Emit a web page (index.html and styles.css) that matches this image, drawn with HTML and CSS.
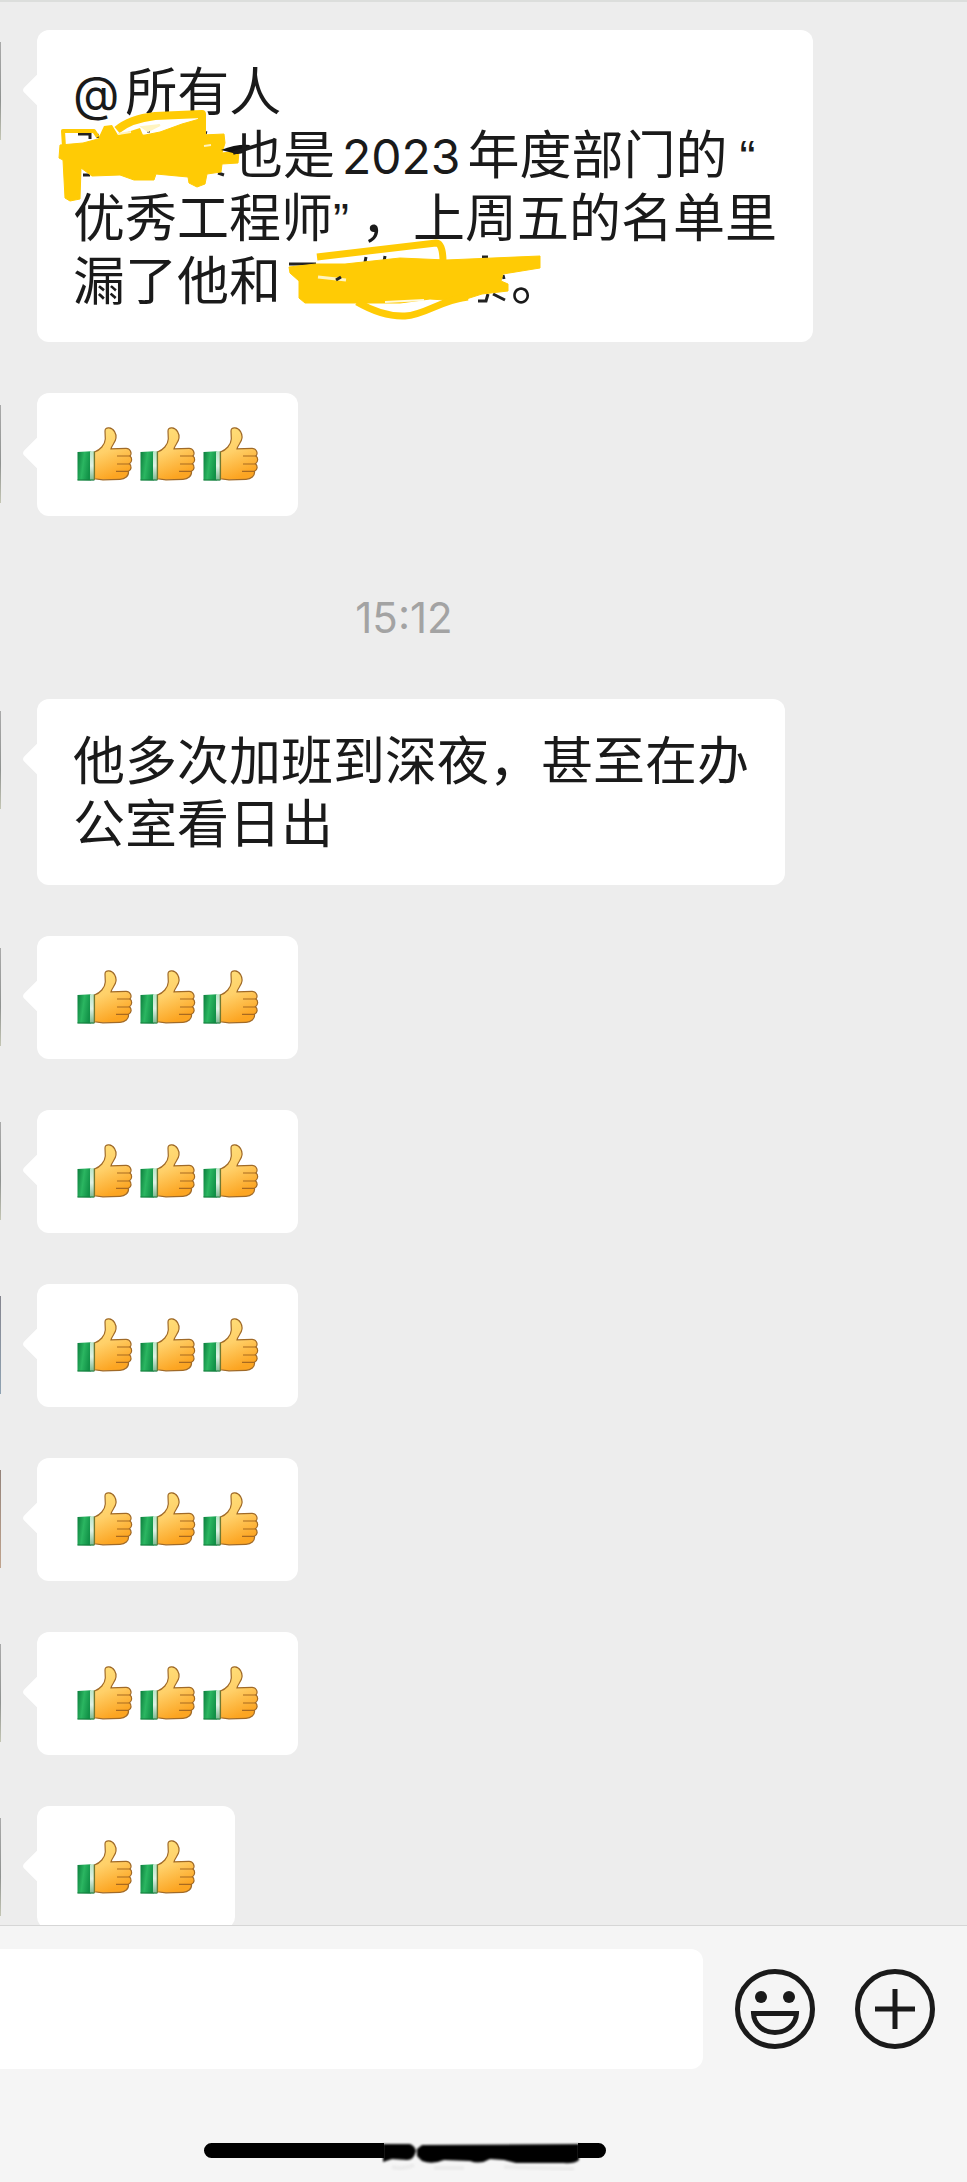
FILE: index.html
```
<!DOCTYPE html>
<html lang="zh-CN">
<head>
    <meta charset="UTF-8" />
    <meta name="viewport" content="width=device-width, initial-scale=1.0" />
    <title>群聊</title>
    <link rel="stylesheet" href="styles.css">
</head>
<body>
    <!-- shared drawings -->
    <svg class="defs" aria-hidden="true">
        <defs>
            <linearGradient id="skin" x1="0" y1="0" x2="0.3" y2="1">
                <stop offset="0" stop-color="#ffe07a" />
                <stop offset="0.5" stop-color="#ffd069" />
                <stop offset="1" stop-color="#fca522" />
            </linearGradient>
            <linearGradient id="sleeve" x1="0" y1="0" x2="1" y2="0.3">
                <stop offset="0" stop-color="#0b7d3c" />
                <stop offset="0.5" stop-color="#2bb661" />
                <stop offset="1" stop-color="#119147" />
            </linearGradient>
            <linearGradient id="cuff" x1="0" y1="0" x2="0" y2="1">
                <stop offset="0" stop-color="#b9e6c8" />
                <stop offset="0.5" stop-color="#dff2e5" />
                <stop offset="1" stop-color="#7cb890" />
            </linearGradient>
            <filter id="smear" x="-5%" y="-50%" width="110%" height="200%">
                <feGaussianBlur stdDeviation="1.2" />
            </filter>
        </defs>
        <symbol id="thumb" viewBox="0 0 63 63">
            <path d="M21.5 29 C27 27 32 22 32.3 16 L32 8 C32 5.5 33.5 4.7 36 4.9 C41 5.3 43.5 11 43 15 C42.6 19 39 22 38 25.8 L53 25.3 C57 25.2 59.5 30 57 33 C59.5 35 59 39 56.5 40.7 C59 43 58.5 47 55.5 48.3 C56 53 52 56.3 47 56.3 L30 56.8 L21.5 55.8 Z" fill="url(#skin)" stroke="#a06a28" stroke-width="1.2" />
            <path d="M44 33 H57 M44 41 H56.5 M43 48.4 H55.5" fill="none" stroke="#a86a20" stroke-width="1.1" />
            <path d="M4.5 29 L18 28.2 V57.4 L4.5 57.2 Z" fill="url(#sleeve)" />
            <path d="M17 28.2 H21 V57.4 H17 Z" fill="url(#cuff)" />
            <path d="M4.5 57 H21.5" stroke="#157a3c" stroke-width="1" />
            <path d="M21.3 28.5 V57" stroke="#6d7b32" stroke-width="1.2" />
        </symbol>
    </svg>

    <main class="chat">
        <div class="message">
            <span class="avatar"></span>
            <p class="bubble"><span class="latin at">@</span>所有人<br><svg class="scribble name-one" viewBox="73 120 158 63" role="img" aria-label="已涂抹"><g fill="none" stroke="#222" stroke-width="3"><path d="M78 134 H90 V139 M97 134 L98 138 M128 136 H133 M147 131 H150 M203 132 L207 133 M83 175 H90 M88 168 L91 172 M218 173 L224 175" /></g><path d="M60 145 L83 143 L98 139 L118 136 L145 135 L160 132 L182 124 L203 118 L203 135 L224 134 L225 143 L222 153 L239 151 L238 163 L222 164 L221 172 L207 174 L205 184 L197 187 L189 183 L188 177 L156 174 L154 180 L134 180 L120 175 L92 176 L81 168 L80 199 L70 201 L65 198 L63 160 L59 158 Z" fill="#ffcb05" stroke="#ffcb05" stroke-width="1" /><path d="M98 139 L104 126 L112 125 L118 135 L140 128 L146 142 H96 Z" fill="#ffcb05" /><path d="M64 147 L63 131 H94 L98 137" fill="none" stroke="#ffcb05" stroke-width="4" stroke-linejoin="round" /><path d="M117 130 Q130 119 155 116 L202 114 V140" fill="none" stroke="#ffcb05" stroke-width="8" stroke-linejoin="round" /><path d="M118 134 L131 132 M142 127 L160 125 L148 131 Z M204 146 L211 145" fill="#fff4c0" stroke="#fff4c0" stroke-width="2" /><path d="M221 150 Q236 144 250 145 Q246 154 237 154 Z" fill="#111" /></svg>也是<span class="latin number">2023</span>年度部门的<span class="latin quote open">“</span><br>优秀工程师<span class="latin quote close">”</span>，上周五的名单里<br>漏了他和<svg class="scribble name-two" viewBox="281 246 230 63" role="img" aria-label="已涂抹"><g fill="none" stroke="#222" stroke-width="3"><path d="M289 264 H316 M366 257 L365 262 M385 256 L384 262 M482 257 H488 M503 275 L504 279 M478 301 H486 L488 294 M493 294 L505 300 M461 300 L468 296" /></g><path d="M289 267 L316 264 L345 264 L400 258 L446 260 L540 256 V268 L503 274 L501 281 L508 284 V291 L482 294 L460 301 L430 299 L400 303 H305 L299 298 V281 L290 273 Z" fill="#ffcb05" stroke="#ffcb05" /><path d="M317 257 L436 243 Q443 243 443 262 M357 302 Q383 317 405 316 C426 315 440 300 468 297" fill="none" stroke="#ffcb05" stroke-width="7" /><path d="M318 277 L346 280" stroke="#fff4c0" stroke-width="3" /><path d="M336 280 L341 277" stroke="#222" stroke-width="3" /><path d="M385 302 L424 300" stroke="#fff9dc" stroke-width="2" /></svg>。</p>
        </div>
        <div class="message">
            <span class="avatar"></span>
            <p class="bubble thumbs"><svg role="img" aria-label="赞"><use href="#thumb" /></svg><svg role="img" aria-label="赞"><use href="#thumb" /></svg><svg role="img" aria-label="赞"><use href="#thumb" /></svg></p>
        </div>

        <time class="time">15:12</time>

        <div class="message">
            <span class="avatar"></span>
            <p class="bubble">他多次加班到深夜，甚至在办<br>公室看日出</p>
        </div>
        <div class="message">
            <span class="avatar"></span>
            <p class="bubble thumbs"><svg role="img" aria-label="赞"><use href="#thumb" /></svg><svg role="img" aria-label="赞"><use href="#thumb" /></svg><svg role="img" aria-label="赞"><use href="#thumb" /></svg></p>
        </div>
        <div class="message">
            <span class="avatar"></span>
            <p class="bubble thumbs"><svg role="img" aria-label="赞"><use href="#thumb" /></svg><svg role="img" aria-label="赞"><use href="#thumb" /></svg><svg role="img" aria-label="赞"><use href="#thumb" /></svg></p>
        </div>
        <div class="message">
            <span class="avatar blue"></span>
            <p class="bubble thumbs"><svg role="img" aria-label="赞"><use href="#thumb" /></svg><svg role="img" aria-label="赞"><use href="#thumb" /></svg><svg role="img" aria-label="赞"><use href="#thumb" /></svg></p>
        </div>
        <div class="message">
            <span class="avatar brown"></span>
            <p class="bubble thumbs"><svg role="img" aria-label="赞"><use href="#thumb" /></svg><svg role="img" aria-label="赞"><use href="#thumb" /></svg><svg role="img" aria-label="赞"><use href="#thumb" /></svg></p>
        </div>
        <div class="message">
            <span class="avatar"></span>
            <p class="bubble thumbs"><svg role="img" aria-label="赞"><use href="#thumb" /></svg><svg role="img" aria-label="赞"><use href="#thumb" /></svg><svg role="img" aria-label="赞"><use href="#thumb" /></svg></p>
        </div>
        <div class="message">
            <span class="avatar"></span>
            <p class="bubble thumbs"><svg role="img" aria-label="赞"><use href="#thumb" /></svg><svg role="img" aria-label="赞"><use href="#thumb" /></svg></p>
        </div>
    </main>

    <footer class="toolbar">
        <form class="composer">
            <input type="text" class="field" aria-label="消息" />
            <button type="button" class="icon" aria-label="表情">
                <svg viewBox="0 0 80 80">
                    <circle cx="40" cy="40" r="37.5" fill="none" stroke="#1a1a1a" stroke-width="5" />
                    <circle cx="26" cy="28" r="6" fill="#1a1a1a" />
                    <circle cx="54" cy="28" r="6" fill="#1a1a1a" />
                    <path d="M18.500 44.500 H61.500 C61 56 51 63.500 40 63.500 C29 63.500 19 56 18.500 44.500 Z" fill="none" stroke="#1a1a1a" stroke-width="5" />
                </svg>
            </button>
            <button type="button" class="icon" aria-label="更多">
                <svg viewBox="0 0 80 80">
                    <circle cx="40" cy="40" r="37.5" fill="none" stroke="#1a1a1a" stroke-width="5" />
                    <path d="M20 40 H60 M40 20 V60" fill="none" stroke="#1a1a1a" stroke-width="5" />
                </svg>
            </button>
        </form>
        <!-- home indicator, partly smudged -->
        <svg class="indicator" viewBox="0 0 402 15" aria-hidden="true">
            <path d="M7.500 0 H180 V15 H7.500 A7.500 7.500 0 0 1 7.500 0 Z M374 0 H394.500 A7.500 7.500 0 0 1 394.500 15 H374 Z" fill="#000" />
            <path d="M179 1 H206 Q211 3 212 8 Q210 17 203 17 L188 16 L179 19 Z M218 2 L375 1 V17 Q370 21 360 20 L312 20 L300 17 L286 16 Q276 22 266 18 L240 17 Q228 22 218 18 L213 13 V6 Z" fill="#050505" filter="url(#smear)" />
            <path d="M188 24 Q200 27 210 22 M230 25 H260 M300 24 L370 26" fill="none" stroke="#ebebeb" stroke-width="4" filter="url(#smear)" />
        </svg>
    </footer>
</body>
</html>
```
FILE: styles.css
```
* {
    box-sizing: border-box;
}

body {
    margin: 0;
    height: 100vh;
    display: flex;
    flex-direction: column;
    background-color: #ededed;
    color: #1a1a1a;
    font-family: "Noto Sans CJK SC", sans-serif;
    overflow: hidden;
}

.defs {
    position: absolute;
    width: 0;
    height: 0;
}

/* Messages */
.chat {
    flex: 1 1 0;
    min-height: 0;
    display: flex;
    flex-direction: column;
    gap: 51px;
    padding-top: 28px;
    border-top: 2px solid #dcdedc;
    overflow: hidden;
}

.message {
    flex: none;
    display: flex;
    align-items: flex-start;
    gap: 36px;
}

.avatar {
    width: 1px;
    height: 98px;
    margin-top: 12px;
    background: linear-gradient(#aaa, #8f9290 60%, #c4c6b4);
}

.avatar.blue {
    background: linear-gradient(#85858f, #8fa3b3);
}

.avatar.brown {
    background: linear-gradient(#94837a, #c0a48e);
}

.bubble {
    position: relative;
    margin: 0;
    padding: 27px 36px 33px;
    border-radius: 12px;
    background-color: #fff;
    font-size: 52px;
    line-height: 63px;
    white-space: nowrap;
}

.bubble::before {
    content: "";
    position: absolute;
    left: -10px;
    top: 47px;
    width: 26px;
    height: 26px;
    border-radius: 4px;
    background-color: #fff;
    transform: rotate(45deg);
}

.latin {
    font-family: Inter, sans-serif;
    font-size: 48px;
    line-height: 48px;
}

.at {
    margin-right: 6px;
}

.number {
    margin: 0 7px;
}

.quote {
    font-family: "Liberation Sans", Arial, sans-serif;
}

.open {
    margin-left: 12px;
}

.close {
    margin-right: 12px;
}

.scribble {
    height: 63px;
    vertical-align: top;
    overflow: visible;
}

.name-one {
    width: 158px;
}

.name-two {
    width: 230px;
}

.thumbs {
    display: flex;
    padding: 30px 36px;
}

.thumbs svg {
    width: 63px;
    height: 63px;
}

.time {
    flex: none;
    margin-right: 159px;
    padding-top: 20px;
    color: #a3a3a3;
    font-family: Inter, sans-serif;
    font-size: 42px;
    line-height: 61px;
    text-align: center;
}

/* Bottom bar */
.toolbar {
    flex: none;
    display: flex;
    flex-direction: column;
    align-items: center;
    gap: 74px;
    padding: 23px 0 24px;
    border-top: 1px solid #d6d6d6;
    background-color: #f5f5f5;
}

.composer {
    align-self: stretch;
    display: flex;
    align-items: center;
    gap: 40px;
    padding-right: 32px;
}

.field {
    flex: 1;
    min-width: 0;
    height: 120px;
    margin-right: -8px;
    padding: 0 36px;
    border: none;
    border-radius: 0 12px 12px 0;
    background-color: #fff;
    font-size: 52px;
}

.icon {
    width: 80px;
    height: 80px;
    padding: 0;
    border: none;
    background: none;
    cursor: pointer;
}

.icon svg {
    display: block;
}

.indicator {
    width: 402px;
    height: 15px;
    margin-right: 157px;
    overflow: visible;
}
```
